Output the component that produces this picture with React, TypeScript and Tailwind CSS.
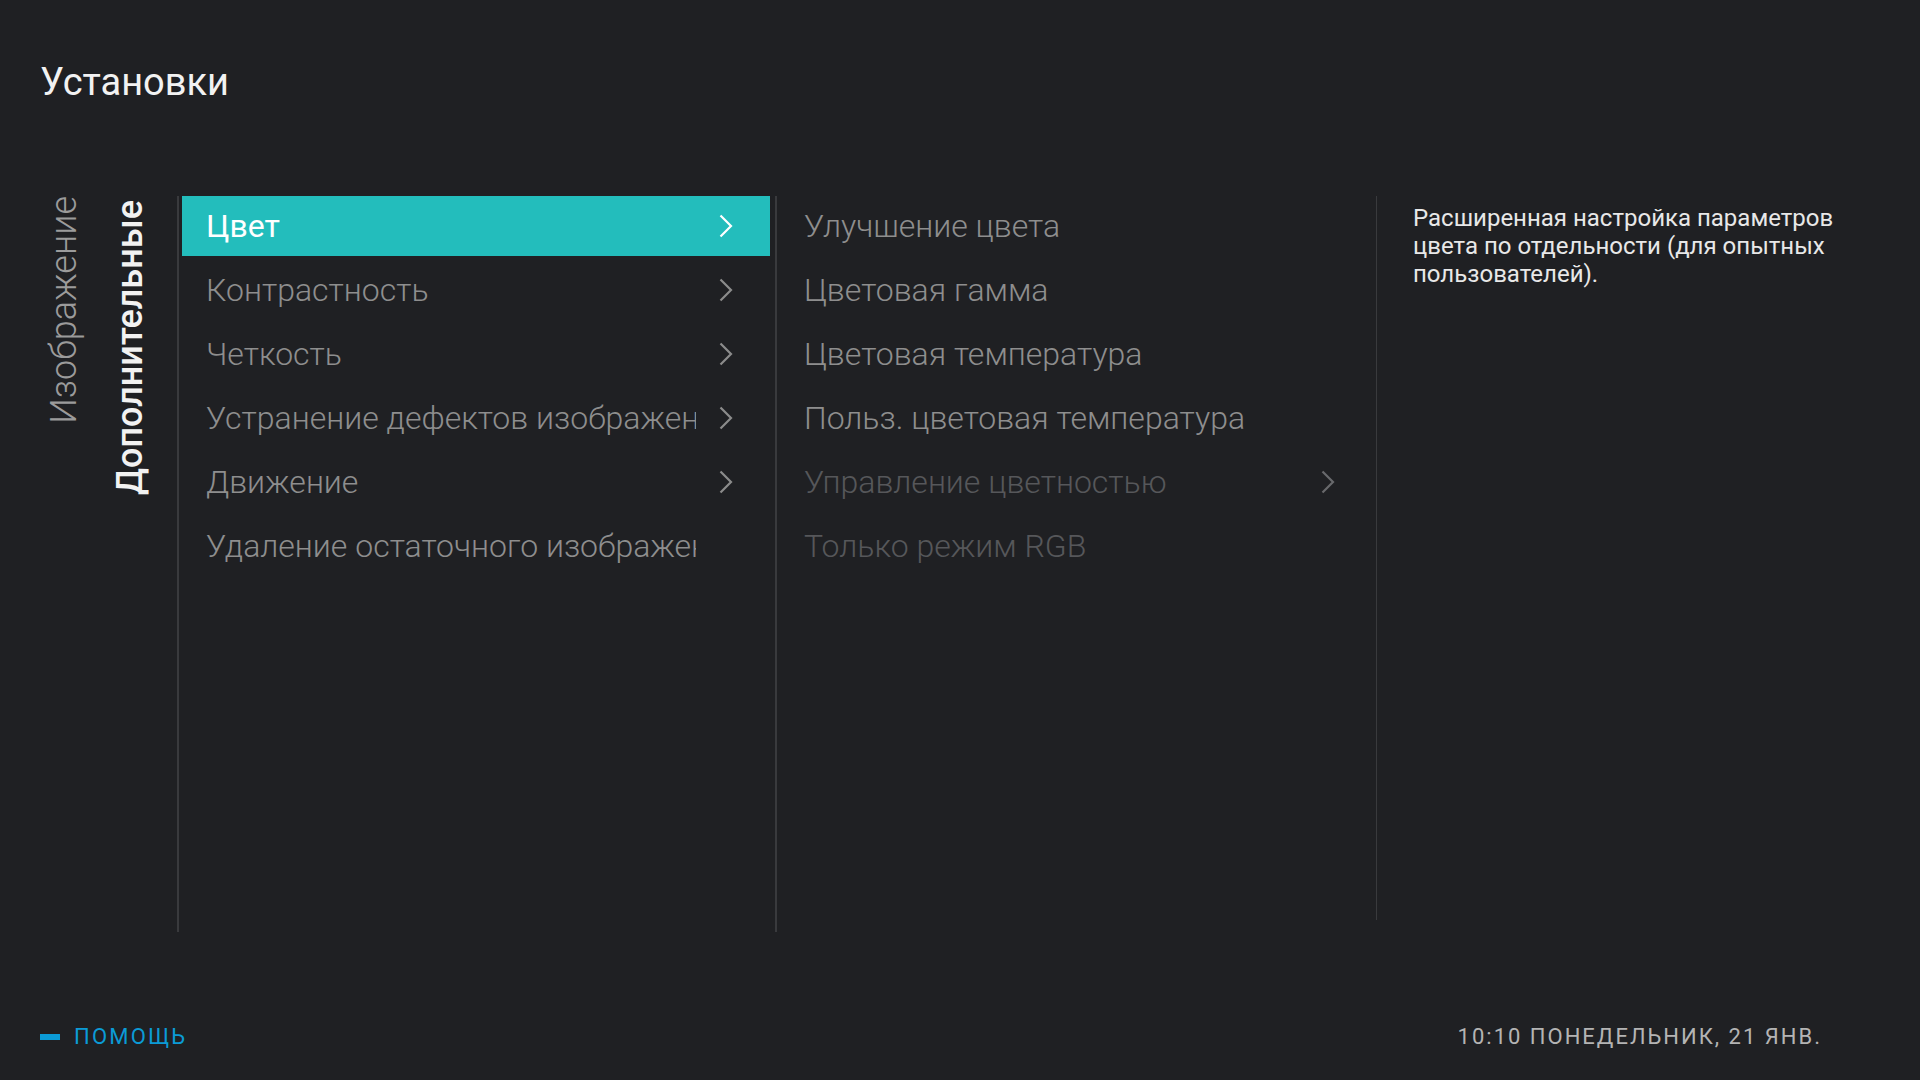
import React from "react";

type Item = { label: string; chevron?: boolean; tone?: "normal" | "dim" };

const PICTURE_ITEMS: Item[] = [
  { label: "Цвет", chevron: true },
  { label: "Контрастность", chevron: true },
  { label: "Четкость", chevron: true },
  { label: "Устранение дефектов изображения", chevron: true },
  { label: "Движение", chevron: true },
  { label: "Удаление остаточного изображения" },
];

const COLOR_ITEMS: Item[] = [
  { label: "Улучшение цвета" },
  { label: "Цветовая гамма" },
  { label: "Цветовая температура" },
  { label: "Польз. цветовая температура" },
  { label: "Управление цветностью", chevron: true, tone: "dim" },
  { label: "Только режим RGB", tone: "dim" },
];

const Chevron = ({ className }: { className?: string }) => (
  <svg width="14" height="24" viewBox="0 0 14 24" fill="none" className={className}>
    <path d="M1.5 1.5L12 12L1.5 22.5" stroke="currentColor" strokeWidth="2.2" />
  </svg>
);

function MenuRow({ item, active }: { item: Item; active?: boolean }) {
  const textColor = active ? "text-white font-normal" : item.tone === "dim" ? "text-[#56575a] font-light" : "text-[#8e8e8e] font-light";
  const chevColor = active ? "text-white" : item.tone === "dim" ? "text-[#68696c]" : "text-[#8b8b8b]";
  return (
    <div className={`flex items-center h-[60px] pl-[24px] pr-[37px] ${active ? "bg-[#23bdbc]" : ""}`}>
      <span className={`flex-1 overflow-hidden whitespace-nowrap text-[32px] leading-[60px] ${textColor}`}>
        {item.label}
      </span>
      <Chevron className={`ml-[23px] shrink-0 ${chevColor} ${item.chevron ? "" : "invisible"}`} />
    </div>
  );
}

export default function App() {
  return (
    <div className="w-[1920px] h-[1080px] bg-[#1f2023] flex flex-col font-['Roboto',sans-serif] overflow-hidden">
      {/* Header */}
      <div className="h-[196px] pl-[40px] pt-[60px]">
        <h1 className="text-[38px] leading-[44px] text-[#f2f2f2]">Установки</h1>
      </div>

      {/* Columns */}
      <div className="h-[736px] flex">
        <div className="w-[177px] flex items-start pl-[46px] gap-[30px]">
          <span className="[writing-mode:vertical-rl] rotate-180 text-[36px] leading-[36px] font-light text-[#9b9b9b] whitespace-nowrap">
            Изображение
          </span>
          <span className="mt-[4px] [writing-mode:vertical-rl] rotate-180 text-[36px] leading-[36px] font-medium text-[#f2f2f2] whitespace-nowrap">
            Дополнительные
          </span>
        </div>
        <div className="w-[2px] bg-[#393a3d]" />

        <div className="w-[596px] pl-[3px] pr-[5px] flex flex-col gap-[4px]">
          {PICTURE_ITEMS.map((item, i) => (
            <MenuRow key={item.label} item={item} active={i === 0} />
          ))}
        </div>
        <div className="w-[2px] bg-[#393a3d]" />

        <div className="w-[599px] pl-[3px] pr-[4px] flex flex-col gap-[4px]">
          {COLOR_ITEMS.map((item) => (
            <MenuRow key={item.label} item={item} />
          ))}
        </div>
        <div className="w-[1px] h-[724px] bg-[#393a3d]" />

        <div className="pl-[36px] pt-[8px]">
          <p className="w-[450px] text-[24px] leading-[28px] text-[#e8e8e8]">
            Расширенная настройка параметров цвета по отдельности (для опытных пользователей).
          </p>
        </div>
      </div>

      {/* Footer */}
      <div className="flex-1 flex items-start justify-between pl-[40px] pr-[98px] pt-[91px]">
        <div className="flex items-center gap-[14px]">
          <div className="w-[20px] h-[6px] bg-[#0b9bd6]" />
          <span className="text-[22px] leading-[28px] tracking-[0.1em] text-[#0b9bd6]">ПОМОЩЬ</span>
        </div>
        <span className="text-[22px] leading-[28px] tracking-[2px] text-[#b4b4b4]">
          10:10 ПОНЕДЕЛЬНИК, 21 ЯНВ.
        </span>
      </div>
    </div>
  );
}
